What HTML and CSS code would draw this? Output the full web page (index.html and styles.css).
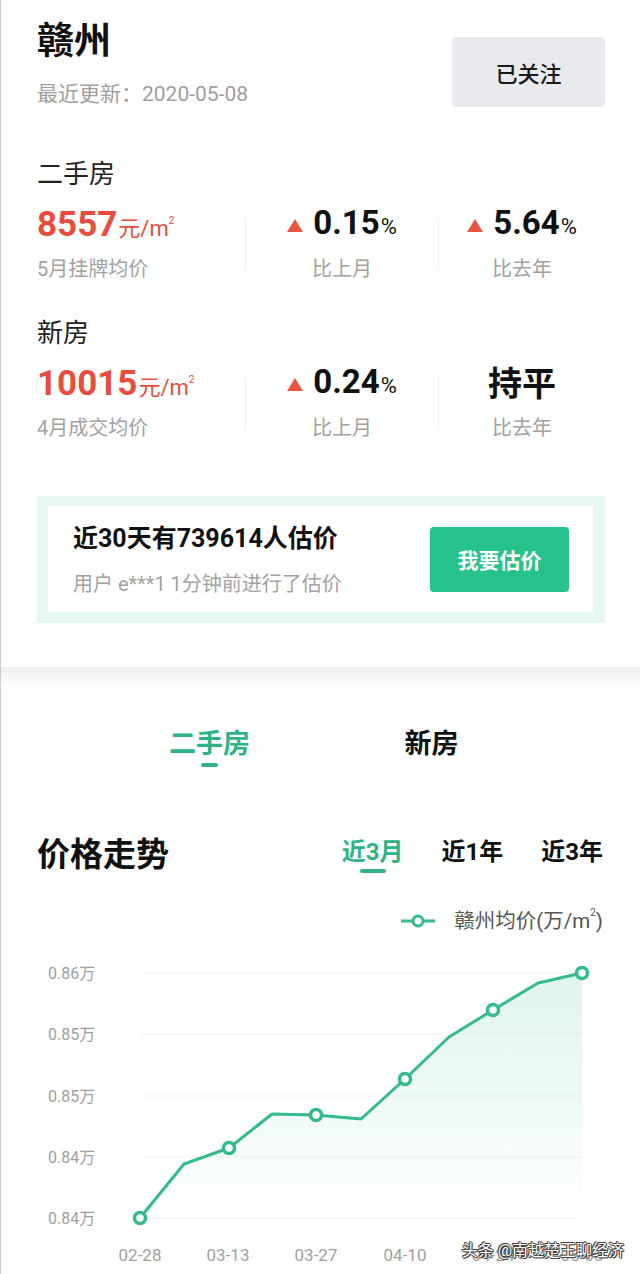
FILE: index.html
```html
<!DOCTYPE html>
<html lang="zh-CN">
<head>
<meta charset="utf-8">
<title>赣州房价</title>
<link rel="stylesheet" href="styles.css">
</head>
<body>
<div class="page">
  <section class="overview">
    <header class="head">
      <div class="head-text">
        <h1 class="city">赣州</h1>
        <p class="updated">最近更新：2020-05-08</p>
      </div>
      <button class="follow" type="button">已关注</button>
    </header>

    <div class="market">
      <h2 class="market-title">二手房</h2>
      <div class="stats">
        <div class="stat stat-main">
          <div class="value price">8557<span class="unit">元/m<sup>2</sup></span></div>
          <div class="caption">5月挂牌均价</div>
        </div>
        <div class="divider"></div>
        <div class="stat">
          <div class="value"><span class="up"></span><span class="num">0.15<span class="pct">%</span></span></div>
          <div class="caption">比上月</div>
        </div>
        <div class="divider"></div>
        <div class="stat">
          <div class="value"><span class="up"></span><span class="num">5.64<span class="pct">%</span></span></div>
          <div class="caption">比去年</div>
        </div>
      </div>
    </div>

    <div class="market market-new">
      <h2 class="market-title">新房</h2>
      <div class="stats">
        <div class="stat stat-main">
          <div class="value price">10015<span class="unit">元/m<sup>2</sup></span></div>
          <div class="caption">4月成交均价</div>
        </div>
        <div class="divider"></div>
        <div class="stat">
          <div class="value"><span class="up"></span><span class="num">0.24<span class="pct">%</span></span></div>
          <div class="caption">比上月</div>
        </div>
        <div class="divider"></div>
        <div class="stat">
          <div class="value"><span class="flat">持平</span></div>
          <div class="caption">比去年</div>
        </div>
      </div>
    </div>

    <div class="estimate">
      <div class="estimate-inner">
        <div class="est-text">
          <div class="est-title">近30天有739614人估价</div>
          <div class="est-sub">用户 e***1 1分钟前进行了估价</div>
        </div>
        <button class="est-btn" type="button">我要估价</button>
      </div>
    </div>
  </section>

  <div class="band"></div>

  <nav class="tabs">
    <div class="tab active"><span class="tab-text">二手房</span><span class="tab-bar"></span></div>
    <div class="tab"><span class="tab-text">新房</span></div>
  </nav>

  <div class="chart-head">
    <h2 class="chart-title">价格走势</h2>
    <div class="periods">
      <div class="period active"><span class="period-text">近3月</span><span class="period-bar"></span></div>
      <div class="period"><span class="period-text">近1年</span></div>
      <div class="period"><span class="period-text">近3年</span></div>
    </div>
  </div>

  <div class="legend">
    <svg class="legend-icon" width="34" height="16" viewBox="0 0 34 16">
      <line x1="0" y1="8" x2="34" y2="8" stroke="#33bb8a" stroke-width="3"/>
      <circle cx="17" cy="8" r="5" fill="#fff" stroke="#33bb8a" stroke-width="3"/>
    </svg>
    <span class="legend-text">赣州均价(万/m<sup>2</sup>)</span>
  </div>

  <svg class="chart" width="639" height="338" viewBox="1 936 639 338">
    <defs>
      <linearGradient id="area" gradientUnits="userSpaceOnUse" x1="0" y1="973" x2="0" y2="1218">
        <stop offset="0" stop-color="#2fbf8a" stop-opacity="0.16"/>
        <stop offset="1" stop-color="#2fbf8a" stop-opacity="0"/>
      </linearGradient>
    </defs>
    <g class="grid">
      <line x1="140" y1="973" x2="582" y2="973"/>
      <line x1="140" y1="1034" x2="582" y2="1034"/>
      <line x1="140" y1="1096" x2="582" y2="1096"/>
      <line x1="140" y1="1157" x2="582" y2="1157"/>
      <line x1="140" y1="1218" x2="582" y2="1218"/>
    </g>
    <g class="ylabels">
      <text x="48" y="979">0.86万</text>
      <text x="48" y="1040">0.85万</text>
      <text x="48" y="1102">0.85万</text>
      <text x="48" y="1163">0.84万</text>
      <text x="48" y="1224">0.84万</text>
    </g>
    <path d="M140,1218 L184,1164 L229,1148 L272,1114 L316,1115 L361,1119 L405,1079 L449,1037 L493,1010 L538,983 L582,973 L582,1218 Z" fill="url(#area)"/>
    <polyline points="140,1218 184,1164 229,1148 272,1114 316,1115 361,1119 405,1079 449,1037 493,1010 538,983 582,973" fill="none" stroke="#33bb8a" stroke-width="3" stroke-linejoin="round"/>
    <g class="dots">
      <circle cx="140" cy="1218" r="5.5"/>
      <circle cx="229" cy="1148" r="5.5"/>
      <circle cx="316" cy="1115" r="5.5"/>
      <circle cx="405" cy="1079" r="5.5"/>
      <circle cx="493" cy="1010" r="5.5"/>
      <circle cx="582" cy="973" r="5.5"/>
    </g>
    <g class="xlabels">
      <text x="140" y="1261">02-28</text>
      <text x="228" y="1261">03-13</text>
      <text x="316" y="1261">03-27</text>
      <text x="405" y="1261">04-10</text>
      <text x="493" y="1261">04-24</text>
      <text x="582" y="1261">05-08</text>
    </g>
  </svg>

  <div class="watermark">头条 @南越楚王聊经济</div>
</div>
</body>
</html>
```

FILE: styles.css
```css
* {
  box-sizing: border-box;
  margin: 0;
  padding: 0;
}

body {
  margin: 0;
  background: #fff;
  font-family: Roboto, "Noto Sans CJK SC", sans-serif;
  color: #1a1a1a;
}

.page {
  position: relative;
  width: 640px;
  height: 1274px;
  overflow: hidden;
  border-left: 1px solid #cfcfcf;
}

/* ---------- overview ---------- */
.overview {
  padding: 20px 35px 44px 36px;
}

.head {
  display: flex;
  justify-content: space-between;
  align-items: flex-start;
}

.city {
  font-size: 37px;
  line-height: 44px;
  font-weight: 700;
  color: #111;
}

.updated {
  margin-top: 17px;
  font-size: 21px;
  line-height: 26px;
  color: #9e9e9e;
}

.follow {
  margin-top: 17px;
  width: 153px;
  height: 70px;
  border: none;
  border-radius: 4px;
  background: #e8eaed;
  font-family: inherit;
  font-size: 22px;
  font-weight: 500;
  color: #1a1a1a;
}

.market-title {
  margin-top: 51px;
  font-size: 26px;
  line-height: 32px;
  font-weight: 400;
  color: #222;
}

.market-new .market-title {
  margin-top: 35px;
}

.stats {
  margin-top: 15px;
  display: grid;
  grid-template-columns: 208px 1px 192px 1px 1fr;
  align-items: center;
}

.divider {
  height: 52px;
  background: #eeeeee;
}

.stat {
  display: flex;
  flex-direction: column;
  align-items: center;
}

.stat-main {
  align-items: flex-start;
}

.value {
  height: 40px;
  line-height: 40px;
  display: flex;
  align-items: center;
  font-size: 33px;
  font-weight: 700;
  color: #111;
  white-space: nowrap;
}

.price {
  display: block;
  font-size: 35px;
  color: #e84c3d;
}

.unit {
  font-size: 22px;
  font-weight: 400;
  margin-left: 1px;
}

.unit sup,
.legend-text sup {
  font-size: 10px;
  vertical-align: 12px;
  line-height: 0;
}

.up {
  width: 0;
  height: 0;
  border-left: 8.5px solid transparent;
  border-right: 8.5px solid transparent;
  border-bottom: 13px solid #ec5640;
  margin-right: 10px;
}

.pct {
  font-size: 22px;
  font-weight: 400;
  margin-left: 1px;
}

.flat {
  font-size: 34px;
  font-weight: 700;
}

.caption {
  margin-top: 11px;
  font-size: 20px;
  line-height: 26px;
  color: #a2a2a2;
}

/* ---------- estimate card ---------- */
.estimate {
  margin-top: 55px;
  padding: 10px 12px 11px 11px;
  background: #e7f8f1;
}

.estimate-inner {
  height: 106px;
  background: #fff;
  display: flex;
  justify-content: space-between;
  align-items: center;
  padding: 0 24px 0 25px;
}

.est-title {
  font-size: 25px;
  line-height: 34px;
  font-weight: 700;
  color: #111;
}

.est-sub {
  margin-top: 15px;
  font-size: 20px;
  line-height: 26px;
  color: #a2a2a2;
}

.est-btn {
  width: 139px;
  height: 65px;
  border: none;
  border-radius: 4px;
  background: #27c28b;
  color: #fff;
  font-family: inherit;
  font-size: 21px;
  font-weight: 700;
}

/* ---------- band ---------- */
.band {
  height: 20px;
  background: linear-gradient(#eeeeee, #ffffff);
}

/* ---------- tabs ---------- */
.tabs {
  padding-top: 40px;
  display: flex;
  justify-content: center;
}

.tab {
  width: 222px;
  display: flex;
  flex-direction: column;
  align-items: center;
}

.tab-text {
  font-size: 27px;
  line-height: 34px;
  font-weight: 700;
  color: #111;
}

.tab.active .tab-text {
  color: #2fb386;
}

.tab-bar {
  margin-top: 2px;
  width: 17px;
  height: 4px;
  border-radius: 2px;
  background: #2fb386;
}

/* ---------- chart head ---------- */
.chart-head {
  margin-top: 68px;
  padding: 0 37px 0 36px;
  display: flex;
  justify-content: space-between;
  align-items: flex-start;
}

.chart-title {
  font-size: 33px;
  line-height: 40px;
  font-weight: 700;
  color: #111;
}

.periods {
  display: flex;
  gap: 38px;
}

.period {
  display: flex;
  flex-direction: column;
  align-items: center;
  padding-top: 1px;
}

.period-text {
  font-size: 24px;
  line-height: 32px;
  font-weight: 700;
  color: #111;
}

.period.active .period-text {
  color: #2fb386;
}

.period-bar {
  margin-top: 1px;
  width: 26px;
  height: 4px;
  border-radius: 2px;
  background: #2fb386;
}

.legend {
  margin-top: 31px;
  padding-right: 37px;
  height: 30px;
  display: flex;
  justify-content: flex-end;
  align-items: center;
  gap: 19px;
}

.legend-text {
  font-size: 20.5px;
  line-height: 30px;
  color: #555;
}

/* ---------- chart ---------- */
.chart {
  display: block;
}

.grid line {
  stroke: #f3f3f3;
  stroke-width: 1;
}

.ylabels text {
  font-family: Roboto, "Noto Sans CJK SC", sans-serif;
  font-size: 16px;
  fill: #a0a0a0;
}

.xlabels text {
  font-family: Roboto, "Noto Sans CJK SC", sans-serif;
  font-size: 17px;
  fill: #a0a0a0;
  text-anchor: middle;
}

.dots circle {
  fill: #fff;
  stroke: #33bb8a;
  stroke-width: 3.5;
}

.watermark {
  position: absolute;
  right: 16px;
  top: 1239px;
  font-size: 16px;
  line-height: 24px;
  color: #fff;
  text-shadow: 1px 0 0 #444, -1px 0 0 #444, 0 1px 0 #444, 0 -1px 0 #444, 1px 1px 0 #444, -1px -1px 0 #444;
}
```
